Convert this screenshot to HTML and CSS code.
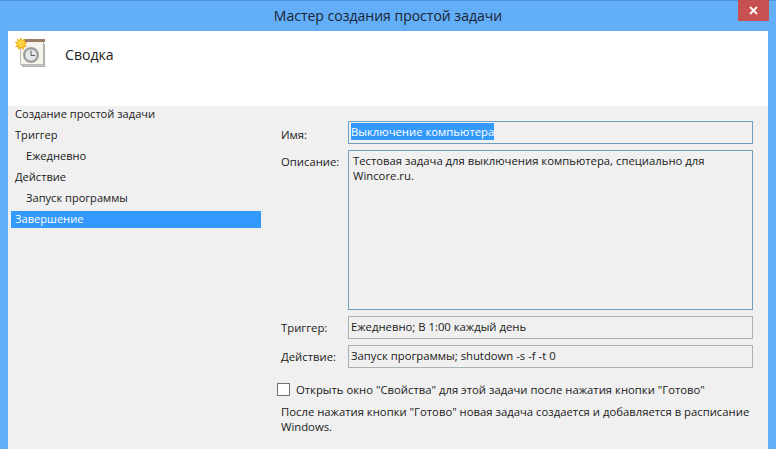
FILE: index.html
```html
<!DOCTYPE html>
<html lang="ru">
<head>
<meta charset="utf-8">
<title>Мастер создания простой задачи</title>
<link rel="stylesheet" href="styles.css">
</head>
<body>
<div class="window">
  <div class="titlebar">
    <span class="title">Мастер создания простой задачи</span>
    <div class="close"><svg width="9" height="9" viewBox="0 0 9 9"><path d="M1 1L8 8M8 1L1 8" stroke="#fff" stroke-width="1.8"/></svg></div>
  </div>
  <div class="header">
    <svg class="icon" width="32" height="32" viewBox="0 0 32 32">
      <rect x="7.500" y="6.500" width="22" height="22" fill="#c9c9c9" stroke="#aaa"/>
      <rect x="5.500" y="3.500" width="23" height="23" fill="#f6f4ee" stroke="#bdb8ae"/>
      <rect x="9" y="1" width="21" height="3" fill="#9a7b68"/>
      <circle cx="16" cy="17" r="8" fill="#a8a49c"/>
      <circle cx="16" cy="17" r="6.300" fill="#e4e8ea" stroke="#7f8a90"/>
      <path d="M16 12.500V17.500H20" fill="none" stroke="#555" stroke-width="1"/>
      <path d="M6 -1L7.200 2L10 .5L9.500 3.500L12.500 4.500L10 6.500L12 9L9 9.200L8.500 12L6 10L3.500 12L3 9.200L0 9L2 6.500L-.5 4.500L2.500 3.500L2 .5L4.800 2Z" fill="#f5b51e"/>
      <circle cx="6" cy="5.500" r="3.500" fill="#fbd23f"/>
    </svg>
    <span class="heading">Сводка</span>
  </div>
  <div class="content">
    <nav class="sidebar">
      <div class="step">Создание простой задачи</div>
      <div class="step">Триггер</div>
      <div class="step sub">Ежедневно</div>
      <div class="step">Действие</div>
      <div class="step sub">Запуск программы</div>
      <div class="step active">Завершение</div>
    </nav>
    <main class="main">
      <div class="row">
        <label class="label">Имя:</label>
        <div class="field focus"><span class="selected">Выключение компьютера</span></div>
      </div>
      <div class="row">
        <label class="label label-top">Описание:</label>
        <div class="field area focus">Тестовая задача для выключения компьютера, специально для<br>Wincore.ru.</div>
      </div>
      <div class="row">
        <label class="label label-top">Триггер:</label>
        <div class="field">Ежедневно; В 1:00 каждый день</div>
      </div>
      <div class="row">
        <label class="label label-top">Действие:</label>
        <div class="field">Запуск программы; shutdown -s -f -t 0</div>
      </div>
      <div class="check-row">
        <span class="checkbox"></span>
        <span>Открыть окно "Свойства" для этой задачи после нажатия кнопки "Готово"</span>
      </div>
      <p class="note">После нажатия кнопки "Готово" новая задача создается и добавляется в расписание<br>Windows.</p>
    </main>
  </div>
</div>
</body>
</html>
```
FILE: styles.css
```css
* { box-sizing: border-box; }
html, body { margin: 0; height: 449px; overflow: hidden; }
body { font-family: "Open Sans", "Noto Sans", sans-serif; font-size: 11.3px; color: #1a1a1a; }
.window {
  width: 776px; height: 449px; display: flex; flex-direction: column;
  background: #62aef8; padding: 0 8px; border-top: 1px solid #4f93d6;
}
.titlebar { height: 30px; flex: none; display: flex; justify-content: center; align-items: center; position: relative; }
.title { font-size: 14px; color: #1c2430; margin-top: -1px; }
.close {
  position: absolute; right: -1px; top: -1px; width: 31px; height: 21px;
  background: #c75050; display: flex; align-items: center; justify-content: center;
}
.header { height: 75px; flex: none; background: #fff; display: flex; align-items: flex-start; padding: 7px 0 0 7px; }
.icon { flex: none; overflow: visible; }
.heading { font-size: 14.1px; margin: 7px 0 0 18px; color: #222; }
.content { flex: 1; display: flex; background: #f0f0f0; }
.sidebar { width: 253px; flex: none; padding-left: 3px; display: flex; flex-direction: column; gap: 4px; font-size: 11.1px; }
.step { height: 17px; line-height: 15px; padding-left: 4px; }
.step.sub { padding-left: 15px; }
.step.active { background: #3399ff; color: #fff; }
.main { flex: 1; padding: 15px 15px 0 16px; display: flex; flex-direction: column; gap: 6px; min-width: 0; }
.row { display: flex; align-items: flex-start; }
.label { width: 71px; flex: none; padding: 6px 0 0 4px; }
.label-top { padding-top: 4px; }
.field {
  flex: 1; height: 23px; border: 1px solid #a9b3b3; padding: 0 2px; line-height: 19px;
  background: #f0f0f0;
}
.field.focus { border-color: #6f9fc0; }
.field.area { height: 160px; padding: 2px 4px; line-height: 15px; }
.selected { background: #3399ff; color: #fff; display: inline-block; line-height: 17px; margin-top: 1px; }
.check-row { display: flex; align-items: center; margin-top: 9px; height: 13px; gap: 6px; }
.checkbox { width: 13px; height: 13px; flex: none; border: 1px solid #707070; background: #fff; }
.note { margin: 2px 0 0 4px; line-height: 15px; white-space: nowrap; }
```
